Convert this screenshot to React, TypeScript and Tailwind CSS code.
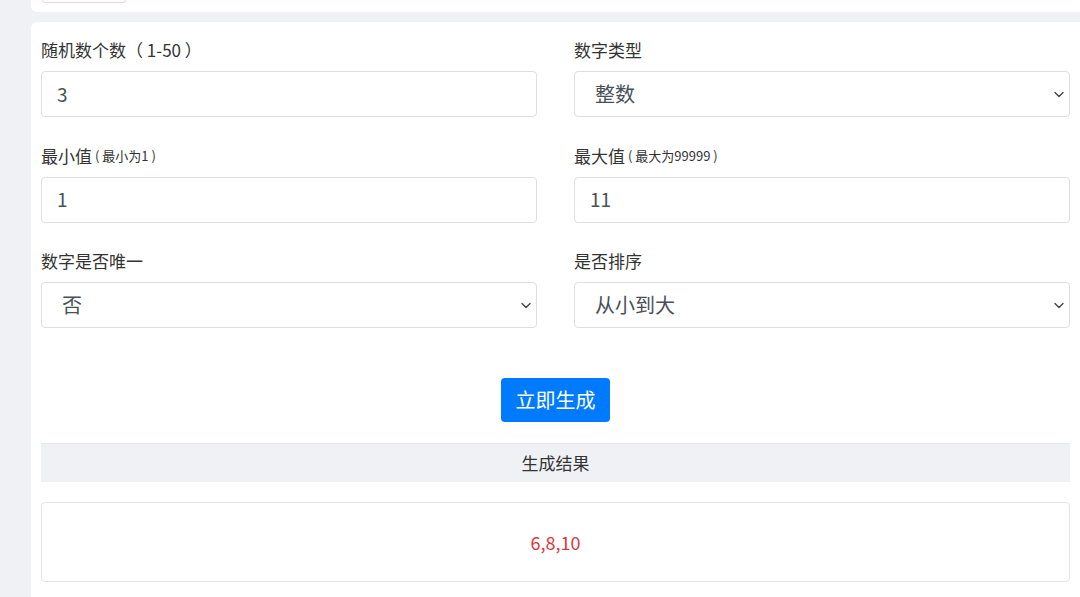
import React from 'react'

const Chevron = () => (
  <svg width="10" height="7" viewBox="0 0 10 7" className="shrink-0">
    <path d="M1 1.5 L5 5.5 L9 1.5" fill="none" stroke="#444" strokeWidth="1.4" strokeLinecap="round" strokeLinejoin="round" />
  </svg>
)

const Label = ({ text, hint }: { text: string; hint?: string }) => (
  <div className="h-6 mb-[9px] flex items-center text-[17px] text-[#333] whitespace-pre">
    <span>{text}</span>
    {hint && <span className="text-[13px] ml-[3px]">{hint}</span>}
  </div>
)

const Input = ({ value }: { value: string }) => (
  <div className="h-[46px] border border-[#dcdfe3] rounded-[4px] flex items-center pl-[15px] text-[19px] text-[#495057]">
    {value}
  </div>
)

const Select = ({ value }: { value: string }) => (
  <div className="h-[46px] border border-[#dcdfe3] rounded-[4px] flex items-center justify-between pl-[20px] pr-[5px] text-[20px] text-[#495057]">
    <span>{value}</span>
    <Chevron />
  </div>
)

export default function App() {
  return (
    <div
      className="h-[597px] overflow-hidden bg-[#eff1f5] pl-[31px]"
      style={{ fontFamily: '"Noto Sans CJK SC", "Noto Sans", sans-serif' }}
    >
      {/* previous card tail */}
      <div className="h-[12px] w-[1049px] bg-white rounded-bl-[6px] pl-[11px]">
        <div className="w-[84px] h-[3px] border-b border-l border-r border-[#dcdfe3] rounded-b-[4px]" />
      </div>

      <div className="mt-[10px] w-[1049px] bg-white rounded-tl-[6px] px-[10px] pt-[16px] pb-[20px]">
        <div className="grid grid-cols-2 gap-x-[37px] gap-y-[26.5px]">
          <div>
            <Label text="随机数个数（ 1-50 ）" />
            <Input value="3" />
          </div>
          <div>
            <Label text="数字类型" />
            <Select value="整数" />
          </div>
          <div>
            <Label text="最小值" hint="( 最小为1 )" />
            <Input value="1" />
          </div>
          <div>
            <Label text="最大值" hint="( 最大为99999 )" />
            <Input value="11" />
          </div>
          <div>
            <Label text="数字是否唯一" />
            <Select value="否" />
          </div>
          <div>
            <Label text="是否排序" />
            <Select value="从小到大" />
          </div>
        </div>

        <div className="flex justify-center mt-[50px]">
          <button className="h-[44px] w-[109px] rounded-[4px] bg-[#007bff] text-white text-[20px]">
            立即生成
          </button>
        </div>

        <div className="mt-[21px] h-[39px] bg-[#eff1f5] border-t border-[#e6e8ec] flex items-center justify-center text-[17px] text-[#333]">
          生成结果
        </div>

        <div className="mt-[20px] h-[80px] border border-[#e3e5e8] rounded-[4px] flex items-center justify-center text-[18px] text-[#dc3545]">
          6,8,10
        </div>
      </div>
    </div>
  )
}
